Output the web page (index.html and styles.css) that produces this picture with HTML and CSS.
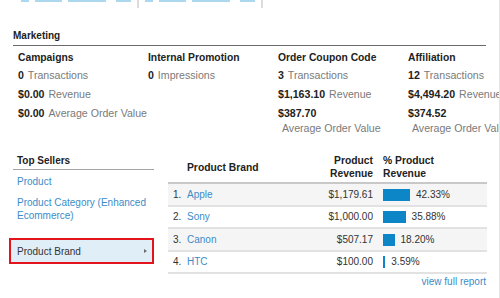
FILE: index.html
```html
<!DOCTYPE html>
<html lang="en">
<head>
  <meta charset="UTF-8">
  <title>Ecommerce Overview</title>
  <link rel="stylesheet" href="styles.css">
</head>
<body>
  <div class="page">
    <div class="toolbar">
      <div class="tb-group">
        <span class="tb-btn s"></span>
        <span class="tb-btn m"></span>
        <span class="tb-btn l"></span>
        <span class="tb-btn xs"></span>
      </div>
      <div class="tb-group">
        <span class="tb-btn s"></span>
        <span class="tb-btn m"></span>
        <span class="tb-btn l"></span>
        <span class="tb-btn xs"></span>
      </div>
    </div>

    <section class="marketing">
      <h2 class="section-title">Marketing</h2>
      <div class="mk-cols">
        <div class="mk-col">
          <h3>Campaigns</h3>
          <div class="stat"><b>0</b> <span>Transactions</span></div>
          <div class="stat"><b>$0.00</b> <span>Revenue</span></div>
          <div class="stat"><b>$0.00</b> <span>Average Order Value</span></div>
        </div>
        <div class="mk-col">
          <h3>Internal Promotion</h3>
          <div class="stat"><b>0</b> <span>Impressions</span></div>
        </div>
        <div class="mk-col">
          <h3>Order Coupon Code</h3>
          <div class="stat"><b>3</b> <span>Transactions</span></div>
          <div class="stat"><b>$1,163.10</b> <span>Revenue</span></div>
          <div class="stat wrap"><b>$387.70</b> <span>Average Order Value</span></div>
        </div>
        <div class="mk-col">
          <h3>Affiliation</h3>
          <div class="stat"><b>12</b> <span>Transactions</span></div>
          <div class="stat"><b>$4,494.20</b> <span>Revenue</span></div>
          <div class="stat wrap"><b>$374.52</b> <span>Average Order Value</span></div>
        </div>
      </div>
    </section>

    <section class="sellers">
      <div class="menu">
        <h2 class="menu-title">Top Sellers</h2>
        <ul>
          <li><a href="#">Product</a></li>
          <li><a href="#">Product Category (Enhanced Ecommerce)</a></li>
          <li class="active"><span>Product Brand</span><i class="arrow"></i></li>
        </ul>
      </div>

      <div class="report">
        <table>
          <thead>
            <tr>
              <th class="rank"></th>
              <th class="name">Product Brand</th>
              <th class="rev">Product<br>Revenue</th>
              <th class="pct">% Product<br>Revenue</th>
            </tr>
          </thead>
          <tbody>
            <tr>
              <td class="rank">1.</td>
              <td class="name"><a href="#">Apple</a></td>
              <td class="rev">$1,179.61</td>
              <td class="pct"><span class="bar" style="width: 27px"></span>42.33%</td>
            </tr>
            <tr>
              <td class="rank">2.</td>
              <td class="name"><a href="#">Sony</a></td>
              <td class="rev">$1,000.00</td>
              <td class="pct"><span class="bar" style="width: 22.6px"></span>35.88%</td>
            </tr>
            <tr>
              <td class="rank">3.</td>
              <td class="name"><a href="#">Canon</a></td>
              <td class="rev">$507.17</td>
              <td class="pct"><span class="bar" style="width: 11.5px"></span>18.20%</td>
            </tr>
            <tr>
              <td class="rank">4.</td>
              <td class="name"><a href="#">HTC</a></td>
              <td class="rev">$100.00</td>
              <td class="pct"><span class="bar" style="width: 2.3px"></span>3.59%</td>
            </tr>
          </tbody>
        </table>
        <div class="full"><a href="#">view full report</a></div>
      </div>
    </section>
  </div>
</body>
</html>
```

FILE: styles.css
```css
body {
  margin: 0;
  font-family: "Liberation Sans", Arial, sans-serif;
  font-size: 10px;
  color: #222;
  background: #fff;
}
a {
  color: #3b8cc9;
  text-decoration: none;
}
.page {
  box-sizing: border-box;
  width: 500px;
  height: 298px;
  border-right: 1px solid #e6e6e6;
  overflow: hidden;
}

/* toolbar remains at the top edge */
.toolbar {
  display: flex;
  height: 8px;
  padding-left: 15px;
}
.tb-group {
  display: flex;
  gap: 6px;
  padding: 0 6px;
  border-right: 2px solid #dcdcdc;
}
.tb-btn {
  height: 2px;
  background: #abd8ef;
}
.tb-btn.s { width: 8px; }
.tb-btn.m { width: 27px; }
.tb-btn.l { width: 38px; margin-right: 4px; }
.tb-btn.xs { width: 15px; }

/* marketing */
.marketing {
  margin: 22px 13px 0;
}
.section-title {
  margin: 0;
  font-size: 10px;
  line-height: 12px;
  padding-bottom: 3px;
  border-bottom: 1px solid #6b6b6b;
}
.mk-cols {
  display: flex;
  padding: 5px 0 0 5px;
}
.mk-col {
  flex: 0 0 130px;
  width: 130px;
}
.mk-col h3 {
  margin: 0 0 2px;
  font-size: 10.3px;
  line-height: 13px;
  white-space: nowrap;
}
.stat {
  font-size: 10.6px;
  line-height: 19px;
  white-space: nowrap;
}
.stat.wrap {
  line-height: 15px;
  padding-top: 2px;
}
.stat b {
  color: #222;
}
.stat span {
  margin-left: 1px;
  color: #7a7a7a;
}
.stat.wrap span {
  display: block;
  margin-left: 0;
  padding-left: 4px;
}

/* top sellers */
.sellers {
  display: flex;
  gap: 14px;
  margin: 16px 13px 0;
}
.menu {
  width: 141px;
  flex: none;
}
.menu-title {
  margin: 0;
  font-size: 10px;
  line-height: 12px;
  padding: 3px 4px 2px;
  border-bottom: 1px solid #a3a3a3;
}
.menu ul {
  list-style: none;
  margin: 0;
  padding: 0;
}
.menu li {
  padding: 5px 4px 3px;
  line-height: 13px;
}
.menu li.active {
  display: flex;
  align-items: center;
  justify-content: space-between;
  margin: 13px 0 0 -4px;
  padding: 4.5px 5px 4.5px 6px;
  border: 2px solid #e3141c;
  background: #e0eef7;
  color: #333;
}
.arrow {
  width: 0;
  height: 0;
  border-left: 3px solid #6a6a6a;
  border-top: 2.5px solid transparent;
  border-bottom: 2.5px solid transparent;
}

.report {
  width: 319px;
  flex: none;
}
table {
  width: 100%;
  border-collapse: collapse;
  table-layout: fixed;
}
th {
  font-size: 10.3px;
  line-height: 13px;
  padding: 2px 0;
  text-align: left;
  vertical-align: middle;
  border-bottom: 2px solid #c8c8c8;
}
td {
  height: 20.5px;
  padding: 0;
  line-height: 13px;
  vertical-align: middle;
  border-bottom: 2px solid #e2e2e2;
  color: #333;
}
tbody tr:nth-child(odd) td {
  background: #f5f5f5;
}
.rank {
  width: 14px;
  padding-left: 5px;
}
.rev {
  width: 80px;
  text-align: right;
}
th.rev {
  text-align: right;
}
.pct {
  width: 104px;
  padding-left: 10px;
}
.bar {
  display: inline-block;
  height: 12px;
  margin-right: 6px;
  vertical-align: middle;
  background: #0c86c7;
}
.full {
  text-align: right;
  line-height: 13px;
  margin-top: 1px;
  padding-right: 1px;
}
```
